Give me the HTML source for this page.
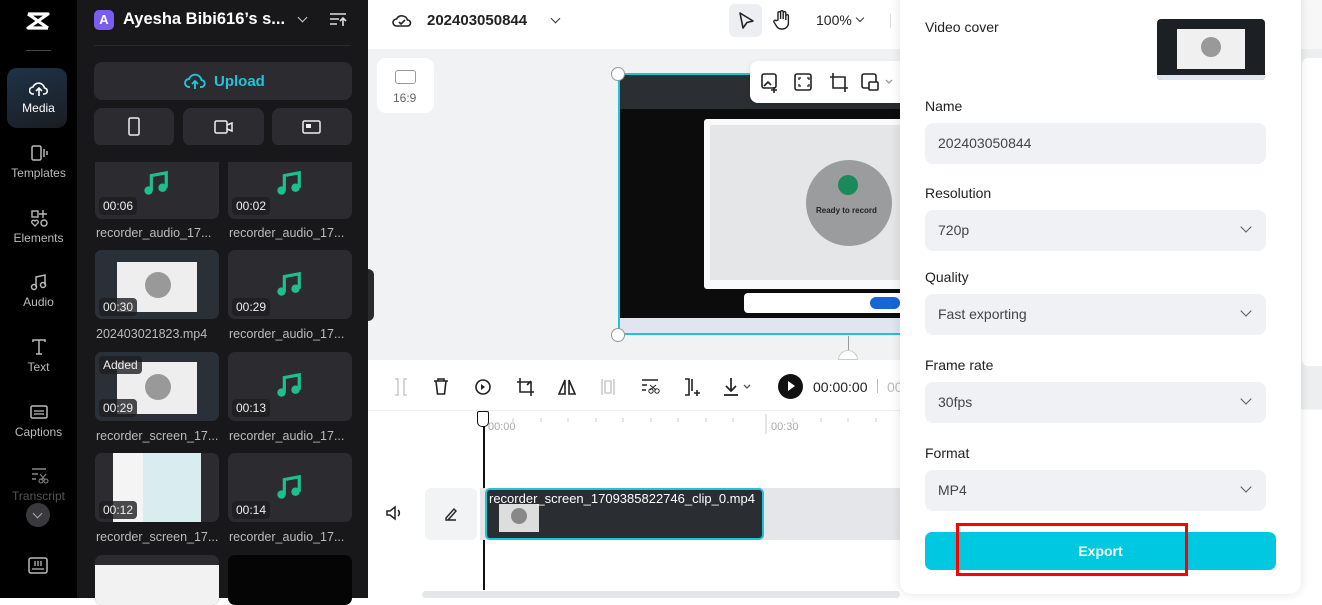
<!DOCTYPE html>
<html><head><meta charset="utf-8"><style>
*{box-sizing:border-box;margin:0;padding:0}
body{width:1322px;height:598px;overflow:hidden;font-family:"Liberation Sans",sans-serif;background:#fff;position:relative}
.a{position:absolute}
.rail{left:0;top:0;width:77px;height:598px;background:#000}
.ri{position:absolute;left:0;width:77px;text-align:center;color:#bbb;font-size:12px}
.ri svg{display:block;margin:0 auto 3px}
.panel{left:77px;top:0;width:291px;height:598px;background:#18181a}
.card{position:absolute;width:124px;height:69px;background:#2c2c30;border-radius:7px;overflow:hidden}
.dur{position:absolute;left:4px;bottom:5px;background:rgba(30,30,32,.8);color:#eee;font-size:12px;padding:2px 4px;border-radius:4px}
.lbl{position:absolute;color:#bbb;font-size:12.5px;width:124px;white-space:nowrap;overflow:hidden}
.shot{position:absolute;background:#111}
.fld{position:absolute;left:925px;width:341px;height:41px;background:#eff1f4;border-radius:8px;font-size:14px;color:#444;padding:12px 13px}
.fl{position:absolute;left:925px;font-size:14px;color:#222}
.chev{position:absolute;right:16px;top:13px;width:8px;height:8px;border-right:1.6px solid #555;border-bottom:1.6px solid #555;transform:rotate(45deg)}
.tb svg{position:absolute}
</style></head><body>
<!-- rail -->
<div class="a rail">
  <svg class="a" style="left:25px;top:10px" width="26" height="22" viewBox="0 0 26 22"><path d="M3 4h20L3 18h20M3 4l20 14" stroke="#fff" stroke-width="3.2" fill="none" stroke-linejoin="round"/></svg>
  <div class="a" style="left:26px;top:50px;width:25px;height:1px;background:#444"></div>
  <div class="a" style="left:7px;top:68px;width:60px;height:60px;border-radius:10px;background:linear-gradient(160deg,#1e3348,#1a1d22)"></div>
  <div class="ri" style="top:80px;color:#fff"><svg width="20" height="18" viewBox="0 0 20 18"><path d="M5 14H4a3.5 3.5 0 0 1 0-7 6 6 0 0 1 11.5 1A3 3 0 0 1 15 14h-1M10 16V9M7 11l3-3 3 3" stroke="#fff" stroke-width="1.6" fill="none"/></svg>Media</div>
  <div class="ri" style="top:143px"><svg width="20" height="20" viewBox="0 0 20 20"><rect x="3" y="3" width="9" height="14" rx="1.5" stroke="#bbb" stroke-width="1.5" fill="none"/><path d="M15 6v8M18 8v4" stroke="#bbb" stroke-width="1.5"/></svg>Templates</div>
  <div class="ri" style="top:208px"><svg width="20" height="20" viewBox="0 0 20 20"><rect x="3" y="3" width="6" height="6" stroke="#bbb" stroke-width="1.4" fill="none"/><path d="M14 2v8M10 6h8" stroke="#bbb" stroke-width="1.4"/><circle cx="15" cy="15" r="3" stroke="#bbb" stroke-width="1.4" fill="none"/><path d="M6 18l-3-3a1.8 1.8 0 0 1 3-2 1.8 1.8 0 0 1 3 2z" stroke="#bbb" stroke-width="1.3" fill="none"/></svg>Elements</div>
  <div class="ri" style="top:272px"><svg width="20" height="20" viewBox="0 0 20 20"><path d="M7 15V5l9-2v10" stroke="#bbb" stroke-width="1.5" fill="none"/><circle cx="5" cy="15" r="2.5" stroke="#bbb" stroke-width="1.5" fill="none"/><circle cx="14" cy="13" r="2.5" stroke="#bbb" stroke-width="1.5" fill="none"/></svg>Audio</div>
  <div class="ri" style="top:337px"><svg width="20" height="20" viewBox="0 0 20 20"><path d="M4 5V3h12v2M10 3v14M7 17h6" stroke="#bbb" stroke-width="1.5" fill="none"/></svg>Text</div>
  <div class="ri" style="top:402px"><svg width="20" height="20" viewBox="0 0 20 20"><rect x="2" y="4" width="16" height="12" rx="1.5" stroke="#bbb" stroke-width="1.5" fill="none"/><path d="M5 9h10M5 12h10" stroke="#bbb" stroke-width="1.3"/></svg>Captions</div>
  <div class="ri" style="top:466px;color:#555"><svg width="20" height="20" viewBox="0 0 20 20"><path d="M3 3h14M3 8h6M3 13h4" stroke="#888" stroke-width="1.4"/><circle cx="12" cy="15" r="2" stroke="#888" fill="none"/><circle cx="17" cy="15" r="2" stroke="#888" fill="none"/><path d="M11 8l5 6M17 8l-5 6" stroke="#888"/></svg>Transcript</div>
  <div class="a" style="left:26px;top:503px;width:24px;height:24px;border-radius:50%;background:#3a3a3e"><div style="position:absolute;left:8px;top:7px;width:7px;height:7px;border-right:1.5px solid #aaa;border-bottom:1.5px solid #aaa;transform:rotate(45deg)"></div></div>
  <svg class="a" style="left:28px;top:557px" width="20" height="18" viewBox="0 0 20 18"><rect x="1" y="1" width="18" height="15" rx="2" stroke="#bbb" stroke-width="1.5" fill="none"/><path d="M4 12h12M7 4v5M10 4v5M13 4v5" stroke="#bbb" stroke-width="1.3"/></svg>
</div>
<!-- panel -->
<div class="a panel">
  <div class="a" style="left:17px;top:10px;width:20px;height:20px;border-radius:5px;background:#7b5cf0;color:#fff;font-size:13px;font-weight:bold;text-align:center;line-height:20px">A</div>
  <div class="a" style="left:46px;top:10px;color:#fff;font-size:16.5px;font-weight:bold">Ayesha Bibi616’s s...</div>
  <div class="a" style="left:222px;top:14px;width:7px;height:7px;border-right:1.5px solid #ccc;border-bottom:1.5px solid #ccc;transform:rotate(45deg)"></div>
  <svg class="a" style="left:252px;top:12px" width="18" height="16" viewBox="0 0 18 16"><path d="M1 2h16M1 7h9M1 12h7M14 14V6M11 9l3-3 3 3" stroke="#ddd" stroke-width="1.6" fill="none"/></svg>
  <div class="a" style="left:17px;top:45px;width:257px;height:1px;background:#2a2a2d"></div>
  <div class="a" style="left:17px;top:62px;width:258px;height:38px;border-radius:8px;background:#2c2c30"></div>
  <svg class="a" style="left:107px;top:72px" width="22" height="18" viewBox="0 0 22 18"><path d="M6 15H5a4 4 0 0 1 0-8 6.5 6.5 0 0 1 12.5 1A3.5 3.5 0 0 1 17 15h-1M11 17V9M8 12l3-3 3 3" stroke="#22c3d9" stroke-width="1.9" fill="none"/></svg>
  <div class="a" style="left:137px;top:73px;color:#22c3d9;font-size:15px;font-weight:bold">Upload</div>
  <div class="a" style="left:17px;top:108px;width:80px;height:38px;border-radius:8px;background:#2c2c30"></div>
  <div class="a" style="left:106px;top:108px;width:81px;height:38px;border-radius:8px;background:#2c2c30"></div>
  <div class="a" style="left:195px;top:108px;width:80px;height:38px;border-radius:8px;background:#2c2c30"></div>
  <svg class="a" style="left:50px;top:117px" width="14" height="20"><rect x="2" y="1" width="10" height="17" rx="1.5" stroke="#eee" stroke-width="1.5" fill="none"/></svg>
  <svg class="a" style="left:137px;top:119px" width="20" height="16"><rect x="1" y="2" width="12" height="12" rx="1.5" stroke="#eee" stroke-width="1.5" fill="none"/><path d="M13 6l5-2v8l-5-2" stroke="#eee" stroke-width="1.5" fill="none"/></svg>
  <svg class="a" style="left:225px;top:119px" width="20" height="16"><rect x="1" y="2" width="17" height="12" rx="1.5" stroke="#eee" stroke-width="1.5" fill="none"/><rect x="4" y="5" width="5" height="4" fill="#eee"/></svg>
</div>
<!-- media cards -->
<div class="card" style="left:95px;top:150px"></div>
<div class="card" style="left:228px;top:150px"></div>
<div class="card" style="left:95px;top:250px"><div class="shot" style="left:0;top:0;width:124px;height:69px;background:#2a3038"></div><div class="shot" style="left:22px;top:12px;width:80px;height:50px;background:#eee"></div><div class="shot" style="left:50px;top:22px;width:26px;height:26px;border-radius:50%;background:#999"></div></div>
<div class="card" style="left:228px;top:250px"></div>
<div class="card" style="left:95px;top:352px"><div class="shot" style="left:0;top:0;width:124px;height:69px;background:#2a3038"></div><div class="shot" style="left:22px;top:10px;width:80px;height:52px;background:#eee"></div><div class="shot" style="left:50px;top:22px;width:26px;height:26px;border-radius:50%;background:#999"></div><div class="dur" style="top:4px;bottom:auto">Added</div></div>
<div class="card" style="left:228px;top:352px"></div>
<div class="card" style="left:95px;top:453px"><div class="shot" style="left:18px;top:0;width:88px;height:69px;background:#d9ecef"></div><div class="shot" style="left:18px;top:0;width:30px;height:69px;background:#f4f4f4"></div></div>
<div class="card" style="left:228px;top:453px"></div>
<div class="card" style="left:95px;top:555px;height:50px"><div class="shot" style="left:0;top:10px;width:124px;height:50px;background:#f2f2f2"></div></div>
<div class="card" style="left:228px;top:555px;height:50px;background:#050505"></div>
<div class="a" style="left:77px;top:145px;width:291px;height:17px;background:#18181a"></div>
<svg style="display:none"><symbol id="note" viewBox="0 0 30 30"><path d="M10 22V6l16-3v16" stroke="#1dbf8f" stroke-width="3.4" fill="none"/><circle cx="7" cy="22" r="4.5" fill="#1dbf8f"/><circle cx="22" cy="19" r="4.5" fill="#1dbf8f"/></symbol></svg>
<svg class="a" style="left:141px;top:170px" width="30" height="28"><use href="#note"/></svg>
<svg class="a" style="left:274px;top:170px" width="30" height="28"><use href="#note"/></svg>
<svg class="a" style="left:274px;top:271px" width="30" height="28"><use href="#note"/></svg>
<svg class="a" style="left:274px;top:372px" width="30" height="28"><use href="#note"/></svg>
<svg class="a" style="left:274px;top:474px" width="30" height="28"><use href="#note"/></svg>
<div class="dur a" style="left:99px;top:197px;bottom:auto">00:06</div>
<div class="dur a" style="left:232px;top:197px;bottom:auto">00:02</div>
<div class="dur a" style="left:99px;top:298px;bottom:auto">00:30</div>
<div class="dur a" style="left:232px;top:298px;bottom:auto">00:29</div>
<div class="dur a" style="left:99px;top:399px;bottom:auto">00:29</div>
<div class="dur a" style="left:232px;top:399px;bottom:auto">00:13</div>
<div class="dur a" style="left:99px;top:501px;bottom:auto">00:12</div>
<div class="dur a" style="left:232px;top:501px;bottom:auto">00:14</div>
<div class="lbl" style="left:96px;top:226px">recorder_audio_17...</div>
<div class="lbl" style="left:229px;top:226px">recorder_audio_17...</div>
<div class="lbl" style="left:96px;top:327px">202403021823.mp4</div>
<div class="lbl" style="left:229px;top:327px">recorder_audio_17...</div>
<div class="lbl" style="left:96px;top:429px">recorder_screen_17...</div>
<div class="lbl" style="left:229px;top:429px">recorder_audio_17...</div>
<div class="lbl" style="left:96px;top:530px">recorder_screen_17...</div>
<div class="lbl" style="left:229px;top:530px">recorder_audio_17...</div>
<!-- top bar -->
<svg class="a" style="left:392px;top:11px" width="20" height="18" viewBox="0 0 20 18"><path d="M5 15H4.5a3.5 3.5 0 0 1 0-7 6 6 0 0 1 11 1A3 3 0 0 1 15.5 15z" stroke="#222" stroke-width="1.6" fill="none"/><path d="M7 11l2 2 4-4" stroke="#222" stroke-width="1.6" fill="none"/></svg>
<div class="a" style="left:427px;top:12px;font-size:15px;font-weight:bold;color:#222">202403050844</div>
<div class="a" style="left:552px;top:15px;width:7px;height:7px;border-right:1.6px solid #333;border-bottom:1.6px solid #333;transform:rotate(45deg)"></div>
<div class="a" style="left:729px;top:4px;width:33px;height:33px;border-radius:6px;background:#eceef1"></div>
<svg class="a" style="left:737px;top:11px" width="18" height="20"><path d="M3 2l13 8-6 1.5L6 17z" stroke="#222" stroke-width="1.6" fill="none" stroke-linejoin="round"/></svg>
<svg class="a" style="left:772px;top:9px" width="20" height="22" viewBox="0 0 20 22"><path d="M6 11V4a1.3 1.3 0 0 1 2.6 0v6V3a1.3 1.3 0 0 1 2.6 0v7V4a1.3 1.3 0 0 1 2.6 0v7V7a1.3 1.3 0 0 1 2.6 0v7a6 6 0 0 1-6 6h-1a6 6 0 0 1-5-3l-2.5-4a1.3 1.3 0 0 1 2.2-1.3z" stroke="#222" stroke-width="1.4" fill="none"/></svg>
<div class="a" style="left:816px;top:12px;font-size:14px;color:#222">100%</div>
<div class="a" style="left:857px;top:15px;width:6px;height:6px;border-right:1.5px solid #333;border-bottom:1.5px solid #333;transform:rotate(45deg)"></div>
<div class="a" style="left:890px;top:14px;width:1px;height:14px;background:#ddd"></div>
<!-- canvas -->
<div class="a" style="left:368px;top:49px;width:532px;height:311px;background:#f1f2f4"></div>
<div class="a" style="left:368px;top:269px;width:6px;height:52px;background:#2a2a2a;border-radius:0 6px 6px 0"></div>
<div class="a" style="left:377px;top:58px;width:57px;height:55px;background:#fff;border-radius:9px"></div>
<div class="a" style="left:395px;top:70px;width:21px;height:14px;border:1.5px solid #999;border-radius:3px"></div>
<div class="a" style="left:393px;top:91px;font-size:12px;color:#666">16:9</div>
<div class="a" style="left:618px;top:73px;width:282px;height:262px;border:2px solid #1fc3d3;border-right:none;background:#0c0c0c;overflow:hidden">
  <div class="a" style="left:0;top:0;width:280px;height:34px;background:#2b2f33"></div>
  <div class="a" style="left:84px;top:44px;width:200px;height:170px;background:#fafafa;border-radius:3px"></div>
  <div class="a" style="left:90px;top:50px;width:200px;height:155px;background:#e5e6e7"></div>
  <div class="a" style="left:186px;top:85px;width:86px;height:86px;border-radius:50%;background:#9a9c9d"></div>
  <div class="a" style="left:218px;top:100px;width:20px;height:20px;border-radius:50%;background:#1a8a5c"></div>
  <div class="a" style="left:196px;top:131px;font-size:8px;font-weight:bold;color:#222">Ready to record</div>
  <div class="a" style="left:124px;top:218px;width:160px;height:20px;background:#fff;border-radius:4px"></div>
  <div class="a" style="left:250px;top:222px;width:30px;height:12px;background:#1766d6;border-radius:6px"></div>
  <div class="a" style="left:0;top:243px;width:280px;height:19px;background:#dfe6f0"></div>
</div>
<div class="a" style="left:611px;top:67px;width:14px;height:14px;border-radius:50%;background:#fff;border:1.5px solid #999"></div>
<div class="a" style="left:611px;top:328px;width:14px;height:14px;border-radius:50%;background:#fff;border:1.5px solid #999"></div>
<div class="a" style="left:848px;top:336px;width:1px;height:14px;background:#999"></div>
<div class="a" style="left:838px;top:350px;width:20px;height:10px;border-radius:10px 10px 0 0;background:#fff;border:1px solid #ccc"></div>
<div class="a" style="left:750px;top:61px;width:150px;height:42px;background:#fff;border-radius:8px 0 0 8px;box-shadow:0 2px 6px rgba(0,0,0,.1)"></div>
<svg class="a tb" style="left:760px;top:72px" width="140" height="22">
<rect x="2" y="2" width="14" height="14" rx="2" stroke="#222" stroke-width="1.6" fill="none"/><path d="M14 15v6M11 18h6M4 14l4-4 3 3" stroke="#222" stroke-width="1.6" fill="none"/>
<rect x="35" y="2" width="16" height="16" rx="2" stroke="#222" stroke-width="1.6" fill="none"/><path d="M39 8V6h2M47 6h2v2M49 12v2h-2M41 14h-2v-2" stroke="#222" stroke-width="1.3" fill="none"/>
<path d="M73 1v15h15M70 5h15v15" stroke="#222" stroke-width="1.6" fill="none"/>
<rect x="102" y="2" width="14" height="14" rx="2" stroke="#222" stroke-width="1.6" fill="none"/><rect x="109" y="10" width="9" height="8" rx="1" stroke="#222" stroke-width="1.6" fill="#fff"/>
<path d="M126 8l3 3 3-3" stroke="#999" stroke-width="1.3" fill="none"/></svg>
<!-- toolbar -->
<div class="a" style="left:368px;top:410px;width:532px;height:1px;background:#eee"></div>
<svg class="a" style="left:392px;top:376px" width="400" height="22">
<path d="M3 3h3v16H3M15 3h-3v16h3" stroke="#ccc" stroke-width="1.6" fill="none"/>
<path d="M42 5h14M46 5V3h6v2M44 5l1.5 13h7L54 5" stroke="#222" stroke-width="1.6" fill="none"/>
<circle cx="91" cy="11" r="7" stroke="#222" stroke-width="1.6" fill="none"/><path d="M89 8l4 3-4 3z" fill="#222"/>
<path d="M128 2v14h14M125 6h14v14M135 9l4-4" stroke="#222" stroke-width="1.6" fill="none"/>
<path d="M173 4l-6 14h6zM177 4l6 14h-6z" stroke="#222" stroke-width="1.6" fill="none"/>
<path d="M210 3v16M222 3v16M213 5h6v12h-6z" stroke="#ccc" stroke-width="1.6" fill="none"/>
<path d="M250 4h16M250 9h5M250 14h4" stroke="#222" stroke-width="1.5"/><circle cx="259" cy="15" r="2.2" stroke="#222" fill="none"/><circle cx="265" cy="15" r="2.2" stroke="#222" fill="none"/><path d="M258 9l6 5M264 9l-6 5" stroke="#222"/>
<path d="M293 3h4v16h-4M300 3v12M302 17h6M305 14v6" stroke="#222" stroke-width="1.6" fill="none"/>
<path d="M339 2v13M334 10l5 5 5-5M332 19h14" stroke="#222" stroke-width="1.7" fill="none"/><path d="M352 9l3 3 3-3" stroke="#555" stroke-width="1.3" fill="none"/></svg>
<div class="a" style="left:778px;top:374px;width:25px;height:25px;border-radius:50%;background:#111"></div>
<div class="a" style="left:788px;top:381px;width:0;height:0;border-left:7px solid #fff;border-top:5.5px solid transparent;border-bottom:5.5px solid transparent"></div>
<div class="a" style="left:813px;top:379px;font-size:14px;color:#222">00:00:00</div>
<div class="a" style="left:877px;top:379px;width:1px;height:14px;background:#bbb"></div>
<div class="a" style="left:887px;top:379px;font-size:14px;color:#bbb">00</div>
<!-- timeline -->
<div class="a" style="left:490px;top:425px;width:410px;height:10px;border-bottom:0">
</div>
<svg class="a" style="left:486px;top:412px" width="414" height="25"><g stroke="#ccc"><path d="M27 6v4M55 6v4M82 6v4M110 6v4M137 6v4M165 6v4M192 6v4M220 6v4M247 6v4M280 2v20M307 6v4M335 6v4M362 6v4M390 6v4"/></g></svg>
<div class="a" style="left:488px;top:421px;font-size:11px;color:#aaa">00:00</div>
<div class="a" style="left:771px;top:421px;font-size:11px;color:#aaa">00:30</div>
<div class="a" style="left:483px;top:420px;width:1.5px;height:170px;background:#111"></div>
<div class="a" style="left:477px;top:411px;width:12px;height:16px;border:1.8px solid #111;border-radius:2px 2px 5px 5px;background:#fff"></div>
<svg class="a" style="left:385px;top:505px" width="18" height="16"><path d="M2 6h3l5-4v12l-5-4H2zM13 5a4 4 0 0 1 0 6" stroke="#222" stroke-width="1.5" fill="none"/></svg>
<div class="a" style="left:425px;top:488px;width:52px;height:52px;border-radius:6px;background:#f2f3f5"></div>
<svg class="a" style="left:443px;top:506px" width="16" height="16"><path d="M3 12l8-9 2 2-8 9H3zM3 14h10" stroke="#222" stroke-width="1.4" fill="none"/></svg>
<div class="a" style="left:480px;top:488px;width:420px;height:52px;background:#e4e6e9"></div>
<div class="a" style="left:485px;top:488px;width:279px;height:52px;border:2px solid #1fc3d3;border-radius:5px;background:#2a2e33;overflow:hidden">
  <div class="a" style="left:12px;top:14px;width:40px;height:28px;background:#ddd"></div>
  <div class="a" style="left:24px;top:18px;width:16px;height:16px;border-radius:50%;background:#888"></div>
  <div class="a" style="left:2px;top:1px;color:#fff;font-size:13px;white-space:nowrap">recorder_screen_1709385822746_clip_0.mp4</div>
</div>
<div class="a" style="left:422px;top:591px;width:478px;height:7px;background:#e4e6e9;border-radius:4px"></div>
<!-- right strip -->
<div class="a" style="left:1300px;top:0;width:22px;height:598px;background:#f7f7f8"></div>
<div class="a" style="left:1300px;top:49px;width:22px;height:360px;background:#eceef0"></div>
<div class="a" style="left:1302px;top:58px;width:20px;height:308px;background:#fff;border-radius:6px 0 0 6px"></div>
<div class="a" style="left:1300px;top:410px;width:22px;height:188px;background:#fff"></div>
<!-- export panel -->
<div class="a" style="left:900px;top:-10px;width:401px;height:604px;background:#fff;border-radius:12px;box-shadow:0 0 10px rgba(0,0,0,.12)"></div>
<div class="fl" style="top:19px">Video cover</div>
<div class="a" style="left:1157px;top:19px;width:108px;height:61px;border-radius:4px;background:#1c1f23;overflow:hidden">
  <div class="a" style="left:20px;top:10px;width:68px;height:40px;background:#f0f0f0"></div>
  <div class="a" style="left:44px;top:18px;width:20px;height:20px;border-radius:50%;background:#999"></div>
  <div class="a" style="left:0;top:56px;width:108px;height:5px;background:#dfe6f0"></div>
</div>
<div class="fl" style="top:98px">Name</div>
<div class="fld" style="top:123px">202403050844</div>
<div class="fl" style="top:185px">Resolution</div>
<div class="fld" style="top:210px">720p<div class="chev"></div></div>
<div class="fl" style="top:269px">Quality</div>
<div class="fld" style="top:294px">Fast exporting<div class="chev"></div></div>
<div class="fl" style="top:357px">Frame rate</div>
<div class="fld" style="top:382px">30fps<div class="chev"></div></div>
<div class="fl" style="top:445px">Format</div>
<div class="fld" style="top:470px">MP4<div class="chev"></div></div>
<div class="a" style="left:925px;top:532px;width:351px;height:38px;border-radius:7px;background:#00c8e0;color:#fff;font-size:14px;font-weight:bold;text-align:center;line-height:38px">Export</div>
<div class="a" style="left:956px;top:523px;width:232px;height:53px;border:3px solid #f00"></div>
</body></html>
